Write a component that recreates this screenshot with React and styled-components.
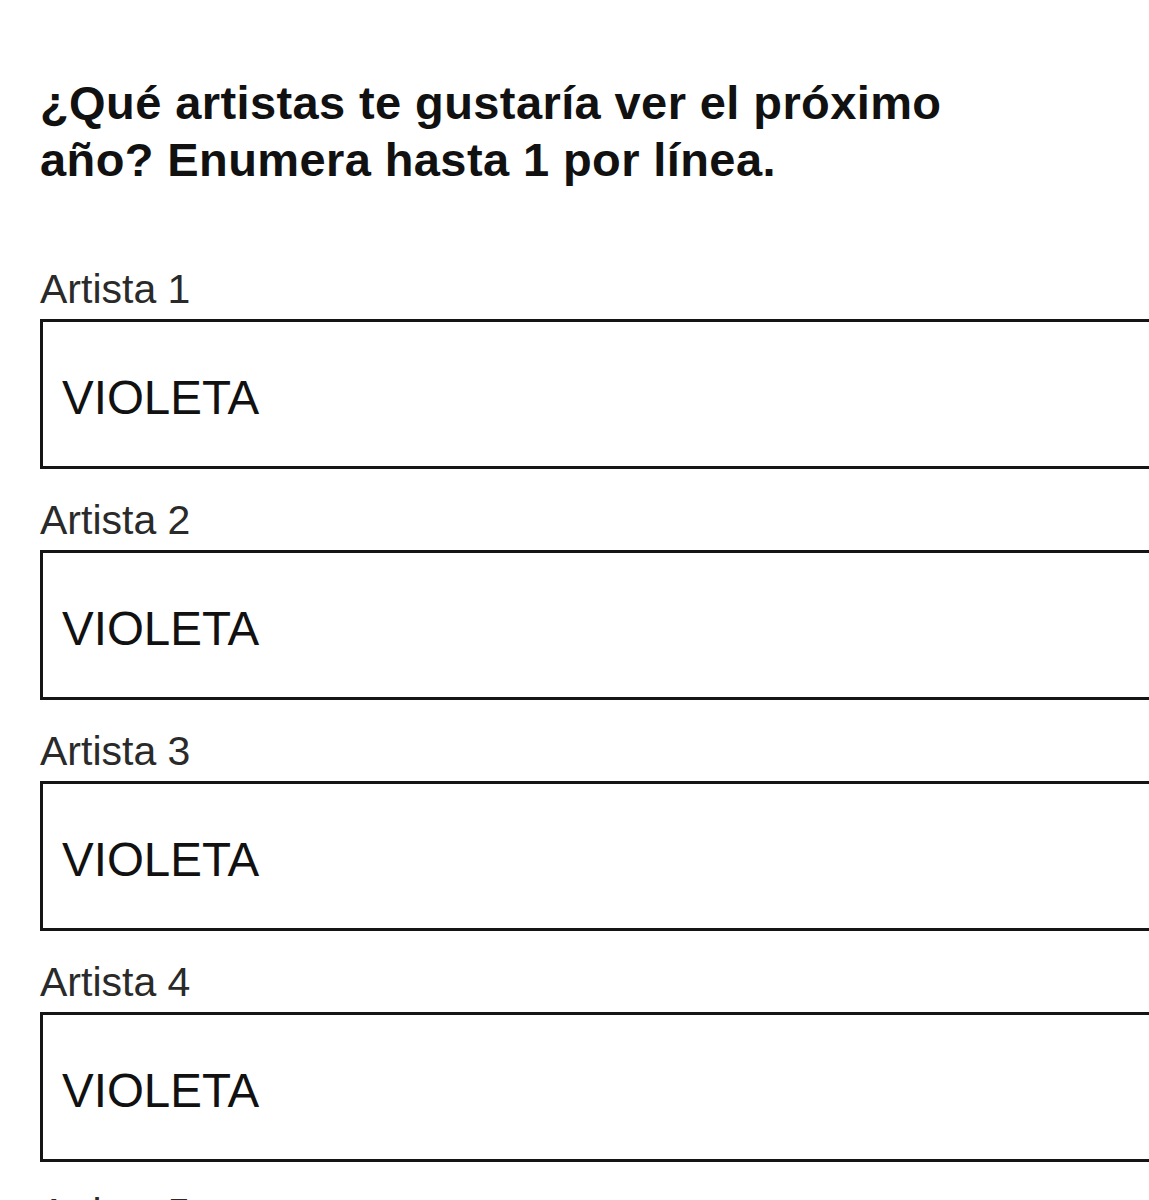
import React from "react";
import styled, { createGlobalStyle } from "styled-components";

const GlobalStyle = createGlobalStyle`
  html, body {
    margin: 0;
    padding: 0;
    background: #ffffff;
    overflow-x: hidden;
  }
  * { box-sizing: border-box; }
`;

const Page = styled.main`
  padding: 74px 0 40px 40px;
  font-family: "Liberation Sans", Arial, Helvetica, sans-serif;
  overflow: hidden;
`;

const Question = styled.h1`
  margin: 0 0 77px 0;
  font-size: 47px;
  line-height: 57px;
  font-weight: 700;
  letter-spacing: 0.4px;
  color: #111111;
  max-width: 960px;
`;

const FieldList = styled.div`
  display: flex;
  flex-direction: column;
  gap: 27px;
`;

const Field = styled.div`
  display: flex;
  flex-direction: column;
  gap: 6px;
`;

const Label = styled.label`
  font-size: 41px;
  line-height: 48px;
  font-weight: 400;
  color: #2a2a2a;
`;

const TextBox = styled.input`
  display: block;
  width: calc(100% + 60px);
  height: 150px;
  margin: 0;
  padding: 6px 0 0 19px;
  border: 3px solid #151515;
  border-radius: 0;
  background: #ffffff;
  font-family: "Liberation Sans", Arial, Helvetica, sans-serif;
  font-size: 47.5px;
  color: #111111;
  outline: none;
  appearance: none;
`;

const artists = [1, 2, 3, 4, 5];

export default function App() {
  return (
    <>
      <GlobalStyle />
      <Page>
        <Question>
          ¿Qué artistas te gustaría ver el próximo año? Enumera hasta 1 por línea.
        </Question>
        <FieldList>
          {artists.map((n) => (
            <Field key={n}>
              <Label htmlFor={`artista-${n}`}>Artista {n}</Label>
              <TextBox
                id={`artista-${n}`}
                type="text"
                readOnly
                defaultValue={n < 5 ? "VIOLETA" : ""}
              />
            </Field>
          ))}
        </FieldList>
      </Page>
    </>
  );
}
